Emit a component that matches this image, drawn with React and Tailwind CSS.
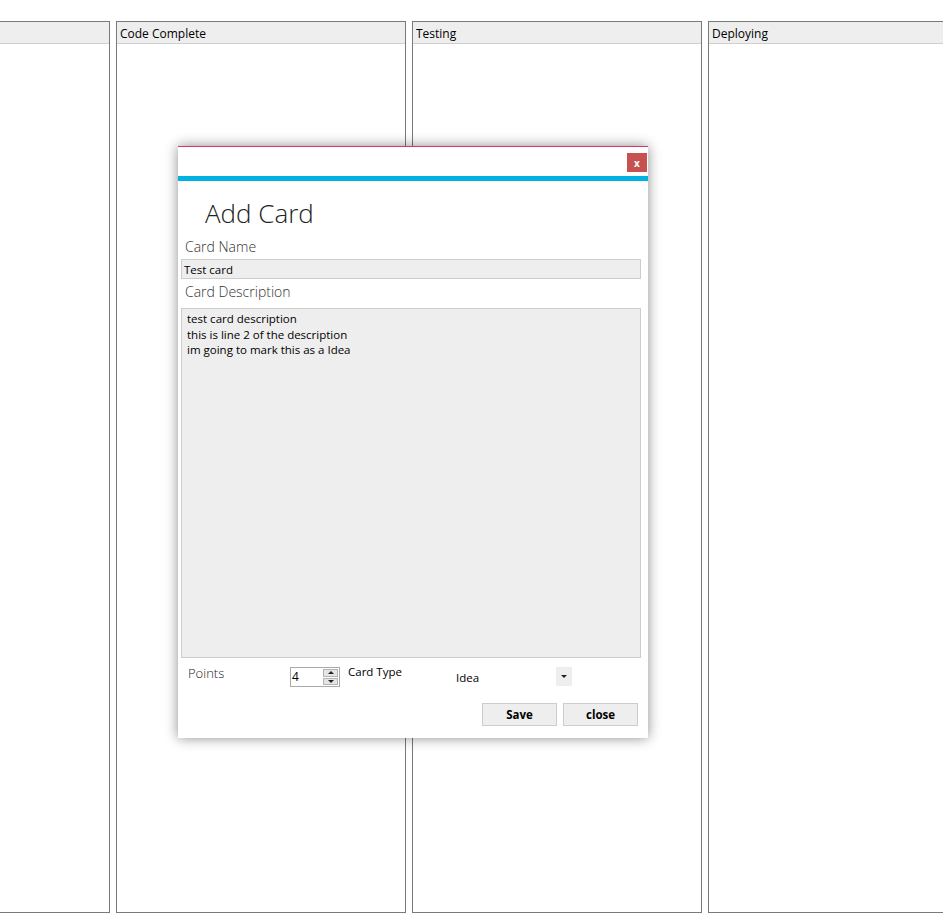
import React from "react";

// first column is scrolled off to the left, its title is not visible
const COLUMNS = ["", "Code Complete", "Testing", "Deploying"];

const FONT = { fontFamily: '"Open Sans", "Noto Sans", sans-serif' };

const Column = ({ title }) => (
  <div className="w-[290px] shrink-0 h-[892px] border border-[#7a7a7a] bg-white flex flex-col">
    <div className="h-[22px] bg-[#eeeeee] border-b border-[#cfcfcf] px-[3px] pt-[2px] text-[12px] leading-[19px] text-black">
      {title}
    </div>
  </div>
);

const AddCardDialog = () => (
  <div className="absolute left-[178px] top-[146px] w-[470px] h-[592px] bg-white border-t border-[#d6336f] shadow-[0_0_12px_rgba(0,0,0,0.45)] flex flex-col">
    {/* title bar */}
    <div className="h-[29px] flex justify-end items-start pt-[6px] pr-[1px]">
      <button className="w-[20px] h-[19px] bg-[#c75050] text-white text-[10px] font-bold leading-[18px] flex items-center justify-center">
        x
      </button>
    </div>
    <div className="h-[5px] bg-[#00b2e2]" />

    <div className="h-[55px] pl-[27px] pt-[16px] text-[26px] font-light leading-[32px] text-[#222]">
      Add Card
    </div>

    <div className="h-[23px] pl-[7px] pt-[1px] text-[14px] font-light leading-[20px] text-[#333]">
      Card Name
    </div>
    <div className="ml-[3px] mr-[7px] h-[20px] bg-[#eeeeee] border border-[#cccccc] px-[2px] pt-[1px] text-[11.5px] leading-[18px] text-black">
      Test card
    </div>

    <div className="h-[29px] pl-[7px] pt-[3px] text-[14px] font-light leading-[20px] text-[#333]">
      Card Description
    </div>
    <div className="ml-[3px] mr-[7px] h-[350px] bg-[#eeeeee] border border-[#cccccc] px-[5px] pt-[2px] text-[11.5px] leading-[15.5px] text-black">
      <div>test card description</div>
      <div>this is line 2 of the description</div>
      <div>im going to mark this as a Idea</div>
    </div>

    {/* points + card type */}
    <div className="h-[45px] flex items-start pt-[9px] text-black">
      <div className="w-[112px] pl-[10px] -mt-[2px] text-[13px] font-light leading-[16px] text-[#222]">
        Points
      </div>
      <div className="w-[50px] h-[20px] border border-[#aaaaaa] bg-white flex items-center">
        <span className="flex-1 pl-[1px] text-[12px] leading-[18px]">4</span>
        <div className="w-[15px] h-[16px] mr-[1px] flex flex-col gap-[1px]">
          <div className="flex-1 bg-[#e5e5e5] border border-[#b5b5b5] flex items-center justify-center">
            <span className="w-0 h-0 border-l-[3px] border-r-[3px] border-b-[3px] border-l-transparent border-r-transparent border-b-[#222]" />
          </div>
          <div className="flex-1 bg-[#e5e5e5] border border-[#b5b5b5] flex items-center justify-center">
            <span className="w-0 h-0 border-l-[3px] border-r-[3px] border-t-[3px] border-l-transparent border-r-transparent border-t-[#222]" />
          </div>
        </div>
      </div>
      <div className="w-[116px] pl-[8px] -mt-[3px] text-[11.5px] leading-[16px]">Card Type</div>
      <div className="w-[100px] pt-[3px] text-[11.5px] leading-[16px]">Idea</div>
      <div className="w-[16px] h-[19px] bg-[#eeeeee] flex items-center justify-center">
        <span className="w-0 h-0 border-l-[3px] border-r-[3px] border-t-[3px] border-l-transparent border-r-transparent border-t-[#222]" />
      </div>
    </div>

    {/* buttons */}
    <div className="flex justify-end gap-[6px] pr-[10px]">
      <button className="w-[75px] h-[23px] bg-[#eeeeee] border border-[#cccccc] text-[11.5px] font-bold leading-[20px] text-black">
        Save
      </button>
      <button className="w-[75px] h-[23px] bg-[#eeeeee] border border-[#cccccc] text-[11.5px] font-bold leading-[20px] text-black">
        close
      </button>
    </div>
  </div>
);

export default function App() {
  return (
    <div className="relative w-[943px] h-[913px] bg-white overflow-hidden" style={FONT}>
      <div className="flex gap-[6px] pt-[21px] ml-[-180px]">
        {COLUMNS.map((c, i) => (
          <Column key={i} title={c} />
        ))}
      </div>
      <AddCardDialog />
    </div>
  );
}
